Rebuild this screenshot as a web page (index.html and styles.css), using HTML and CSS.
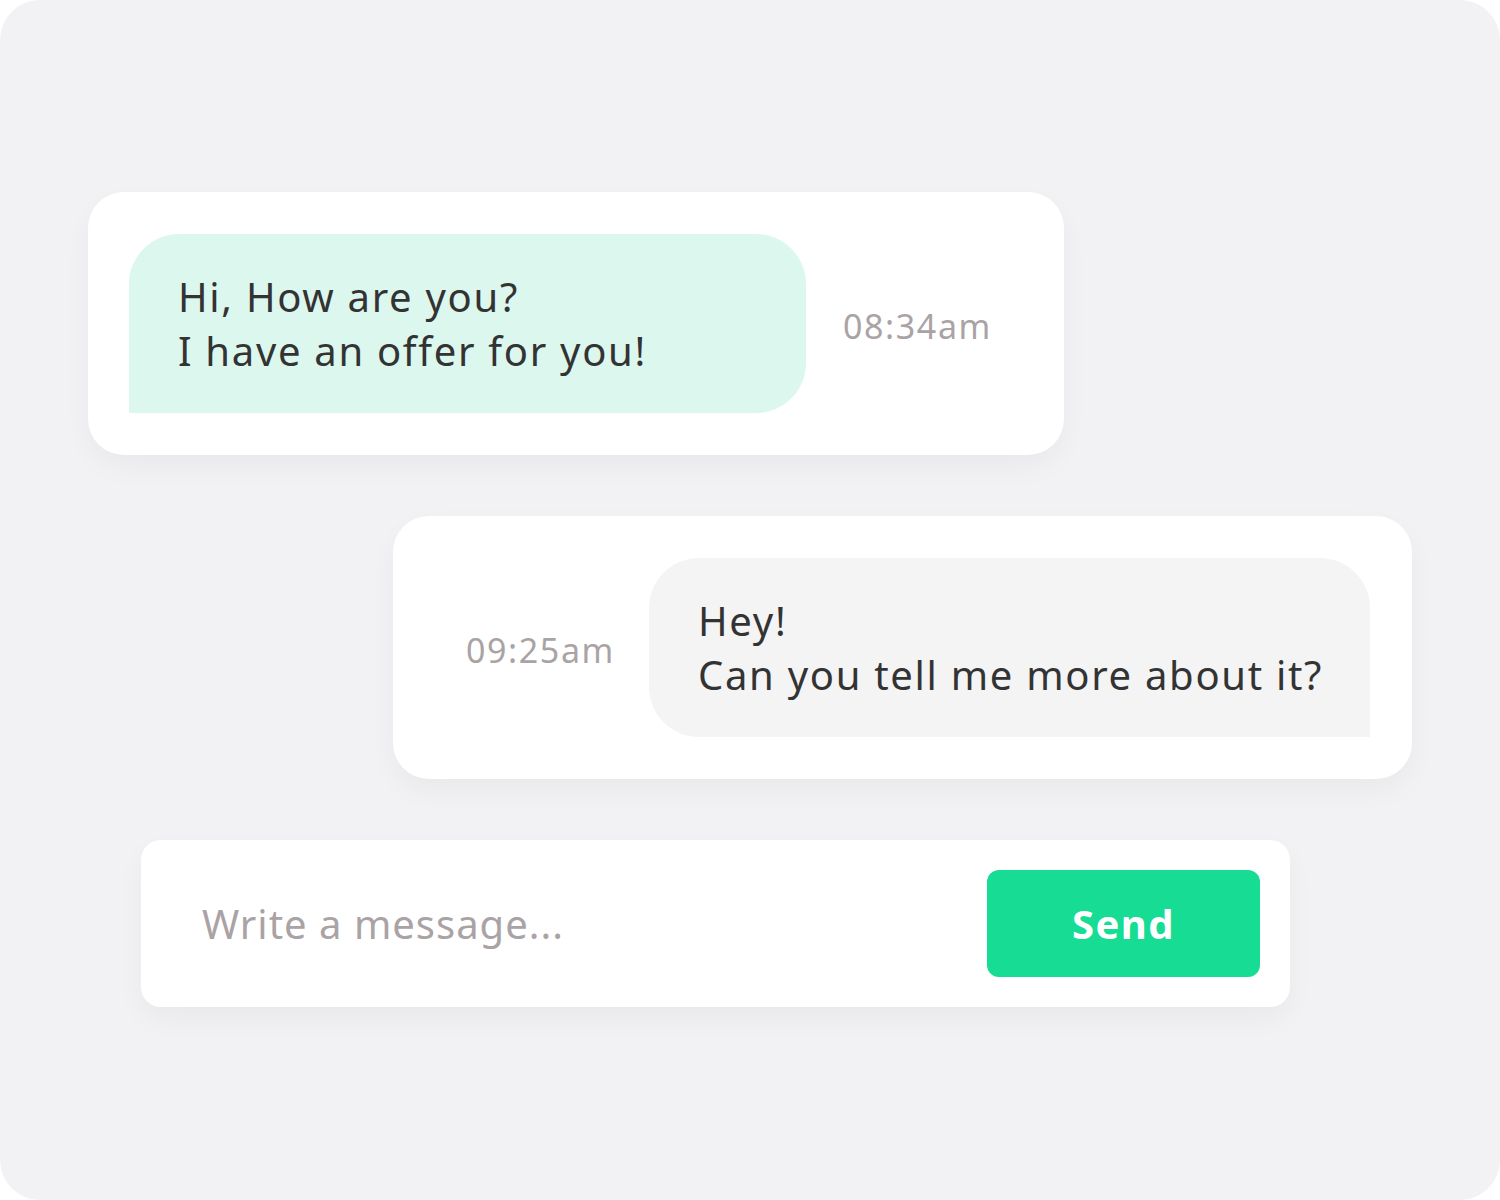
FILE: index.html
```html
<!DOCTYPE html>
<html>
<head>
<meta charset="utf-8">
<link rel="stylesheet" href="styles.css">
</head>
<body>
<div class="frame">
  <div class="card card-in">
    <div class="bubble bubble-in">
      <div>Hi, How are you?</div>
      <div>I have an offer for you!</div>
    </div>
    <div class="time time-in">08:34am</div>
  </div>
  <div class="card card-out">
    <div class="time time-out">09:25am</div>
    <div class="bubble bubble-out">
      <div>Hey!</div>
      <div>Can you tell me more about it?</div>
    </div>
  </div>
  <div class="composer">
    <div class="placeholder">Write a message...</div>
    <div class="send">Send</div>
  </div>
</div>
</body>
</html>
```

FILE: styles.css
```css
* { box-sizing: border-box; }
html, body { margin: 0; padding: 0; background: #ffffff; }
body { font-family: "Noto Sans", "Lato", sans-serif; }
.frame {
  width: 1500px;
  height: 1200px;
  background: #f2f2f4;
  border-radius: 40px;
  padding-top: 192px;
  display: flex;
  flex-direction: column;
}
.card {
  background: #ffffff;
  border-radius: 36px;
  box-shadow: 0 12px 28px rgba(0, 0, 0, 0.04);
  display: flex;
  align-items: center;
  height: 263px;
}
.card-in {
  margin-left: 88px;
  width: 976px;
  padding: 0 0 0 41px;
}
.card-out {
  margin-left: 393px;
  margin-top: 61px;
  width: 1019px;
  padding: 0 0 0 73px;
}
.bubble {
  height: 179px;
  padding: 0 0 0 49px;
  display: flex;
  flex-direction: column;
  justify-content: center;
  font-size: 40px;
  line-height: 54px;
  letter-spacing: 1.7px;
  color: #333333;
  white-space: nowrap;
}
.bubble-in {
  width: 677px;
  background: #dcf7ee;
  border-radius: 50px 50px 50px 0;
}
.bubble-out {
  width: 721px;
  background: #f4f4f5;
  border-radius: 50px 50px 0 50px;
  margin-left: 39px;
}
.time {
  font-size: 34px;
  letter-spacing: 1.6px;
  color: #aaa3a5;
  white-space: nowrap;
  padding-top: 4px;
}
.time-in { margin-left: 37px; }
.time-out { width: 144px; }
.composer {
  margin-left: 141px;
  margin-top: 61px;
  width: 1149px;
  height: 167px;
  background: #ffffff;
  border-radius: 20px;
  box-shadow: 0 12px 28px rgba(0, 0, 0, 0.04);
  display: flex;
  align-items: center;
  justify-content: space-between;
  padding: 0 30px 0 61px;
}
.placeholder {
  font-size: 40px;
  letter-spacing: 1px;
  color: #aaa3a5;
}
.send {
  width: 273px;
  height: 107px;
  background: #17dc94;
  border-radius: 12px;
  color: #ffffff;
  font-size: 40px;
  font-weight: 700;
  letter-spacing: 1.5px;
  display: flex;
  align-items: center;
  justify-content: center;
}
```
